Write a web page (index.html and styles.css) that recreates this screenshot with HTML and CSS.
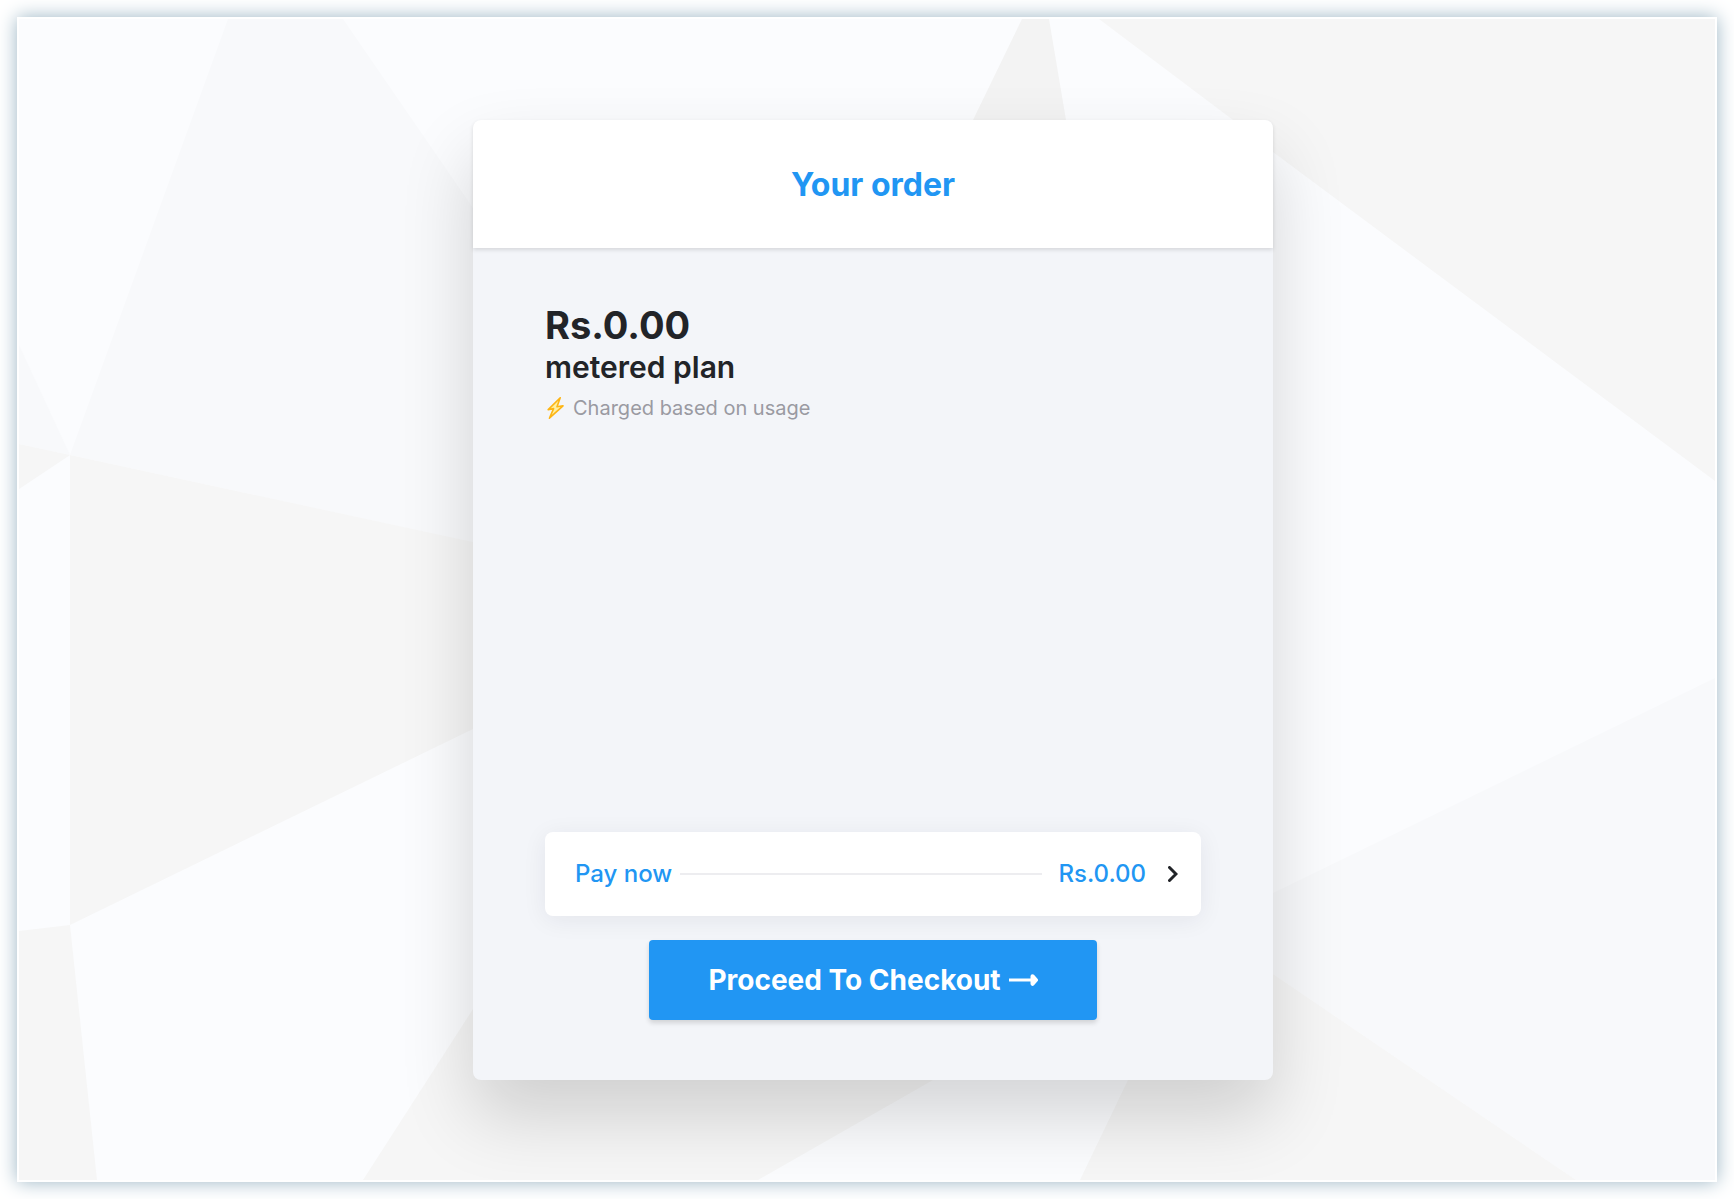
FILE: index.html
```html
<!DOCTYPE html>
<html lang="en">
<head>
  <meta charset="UTF-8">
  <meta name="viewport" content="width=device-width, initial-scale=1">
  <title>Your order</title>
  <link rel="stylesheet" href="styles.css">
</head>
<body>

  <main class="frame">
    <svg class="backdrop" viewBox="0 0 1696 1161" preserveAspectRatio="none" aria-hidden="true">
      <rect width="1696" height="1161" fill="#fbfcfe"/>
      <g fill="#f8f9fb">
        <polygon points="209,0 324,0 454,189 600,401 600,555 51,436"/>
        <polygon points="0,326 51,436 0,425"/>
        <polygon points="1696,659 1254,874 1100,949 1254,955 1557,1161 1696,1161"/>
      </g>
      <g fill="#f6f6f6">
        <polygon points="0,425 51,436 0,470"/>
        <polygon points="51,436 454,523 600,555 600,648 454,710 51,906"/>
        <polygon points="0,912 51,906 78,1161 0,1161"/>
        <polygon points="344,1161 454,990 600,763 1004,990 914,1061 739,1161"/>
        <polygon points="1061,1161 1109,1061 1180,905 1254,955 1557,1161"/>
        <polygon points="1080,0 1214,101 1254,133 1696,462 1696,0"/>
      </g>
      <polygon points="1003,0 1030,0 1047,101 1060,180 915,180 954,101" fill="#f3f3f3"/>
    </svg>

    <section class="card">
      <header class="card-header">
        <h1>Your order</h1>
      </header>

      <div class="card-body">
        <div class="plan">
          <p class="price">Rs.0.00</p>
          <h2>metered plan</h2>
          <p class="note">
            <svg class="bolt" viewBox="0 0 20 22" aria-hidden="true">
              <path d="M15.2 .8 3.2 12.6 8.6 11.6 4.4 21.2 18 8.8 12 9.8Z" fill="#fff0a0" stroke="#fdb515" stroke-width="1.6" stroke-linejoin="round"/>
            </svg>
            <span>Charged based on usage</span>
          </p>
        </div>

        <div class="actions">
          <button type="button" class="pay-row">
            <span>Pay now</span>
            <span class="line"></span>
            <span class="amount">Rs.0.00</span>
            <svg class="chevron" viewBox="0 0 10 16" aria-hidden="true">
              <path d="M1.5 1.5 8 8 1.5 14.5"/>
            </svg>
          </button>

          <button type="button" class="checkout">
            <span>Proceed To Checkout</span>
            <svg class="arrow" viewBox="0 0 29 12" aria-hidden="true">
              <path d="M0 6H23" stroke="#fff" stroke-width="3"/>
              <path d="M23.5 2.2 27 6 23.5 9.8Z" fill="#fff" stroke="#fff" stroke-width="4" stroke-linejoin="round"/>
            </svg>
          </button>
        </div>
      </div>
    </section>
  </main>

</body>
</html>
```
FILE: styles.css
```css
* {
  box-sizing: border-box;
}

body {
  margin: 0;
  min-height: 100vh;
  padding: 17px;
  display: flex;
  background-color: #ffffff;
  color: #222428;
  font-family: Inter, "Liberation Sans", sans-serif;
}

h1, h2, p {
  margin: 0;
}

button {
  border: none;
  font-family: inherit;
  cursor: pointer;
}

/* backdrop and card share one grid cell */
.frame {
  flex: 1;
  display: grid;
  border: 2px solid #ffffff;
  box-shadow: 0 0 18px #9bb5c4;
}

.backdrop {
  grid-area: 1 / 1;
  width: 100%;
  height: 100%;
  min-height: 0;
  contain: size;
}

.card {
  grid-area: 1 / 1;
  place-self: center;
  display: flex;
  flex-direction: column;
  width: calc(100% - 24px);
  max-width: 800px;
  min-height: 960px;
  margin: 24px 0 24px 12px;
  border-radius: 8px;
  background-color: #f3f5f9;
  box-shadow: 0 36px 72px rgba(0, 0, 0, 0.16);
}

.card-header {
  padding: 45px 32px 43px;
  border-radius: 8px 8px 0 0;
  background-color: #ffffff;
  box-shadow: 0 2px 4px rgba(0, 0, 0, 0.12);
  text-align: center;
}

h1 {
  color: #2196f3;
  font-size: 32px;
  font-weight: 700;
  line-height: 40px;
}

.card-body {
  flex: 1;
  display: flex;
  flex-direction: column;
  justify-content: space-between;
  padding: 53px 72px 60px;
}

.price {
  font-size: 38px;
  font-weight: 700;
  line-height: 48px;
}

h2 {
  font-size: 30px;
  font-weight: 600;
  line-height: 36px;
}

.note {
  display: flex;
  align-items: center;
  gap: 8px;
  color: #9a9aa2;
  font-size: 20px;
  line-height: 46px;
}

.bolt {
  width: 20px;
  height: 22px;
}

.actions {
  display: flex;
  flex-direction: column;
  align-items: center;
  gap: 24px;
}

.pay-row {
  display: flex;
  align-items: center;
  width: 100%;
  padding: 22px 23px 22px 30px;
  border-radius: 8px;
  background-color: #ffffff;
  box-shadow: 0 4px 24px rgba(30, 30, 60, 0.07);
  color: #2196f3;
  font-size: 24px;
  font-weight: 500;
  line-height: 40px;
}

.line {
  flex: 1;
  height: 2px;
  margin: 0 16px 0 8px;
  background-color: #ededf0;
}

.chevron {
  width: 10px;
  height: 16px;
  margin-left: 22px;
  fill: none;
  stroke: #222428;
  stroke-width: 3;
  stroke-linecap: round;
}

.checkout {
  display: flex;
  align-items: center;
  justify-content: center;
  gap: 8px;
  width: 448px;
  max-width: 100%;
  padding: 20px 16px;
  border-radius: 4px;
  background-color: #2196f3;
  box-shadow: 0 3px 5px rgba(0, 0, 0, 0.14);
  color: #ffffff;
  font-size: 28px;
  font-weight: 700;
  line-height: 40px;
}

.arrow {
  width: 29px;
  height: 12px;
}
```
